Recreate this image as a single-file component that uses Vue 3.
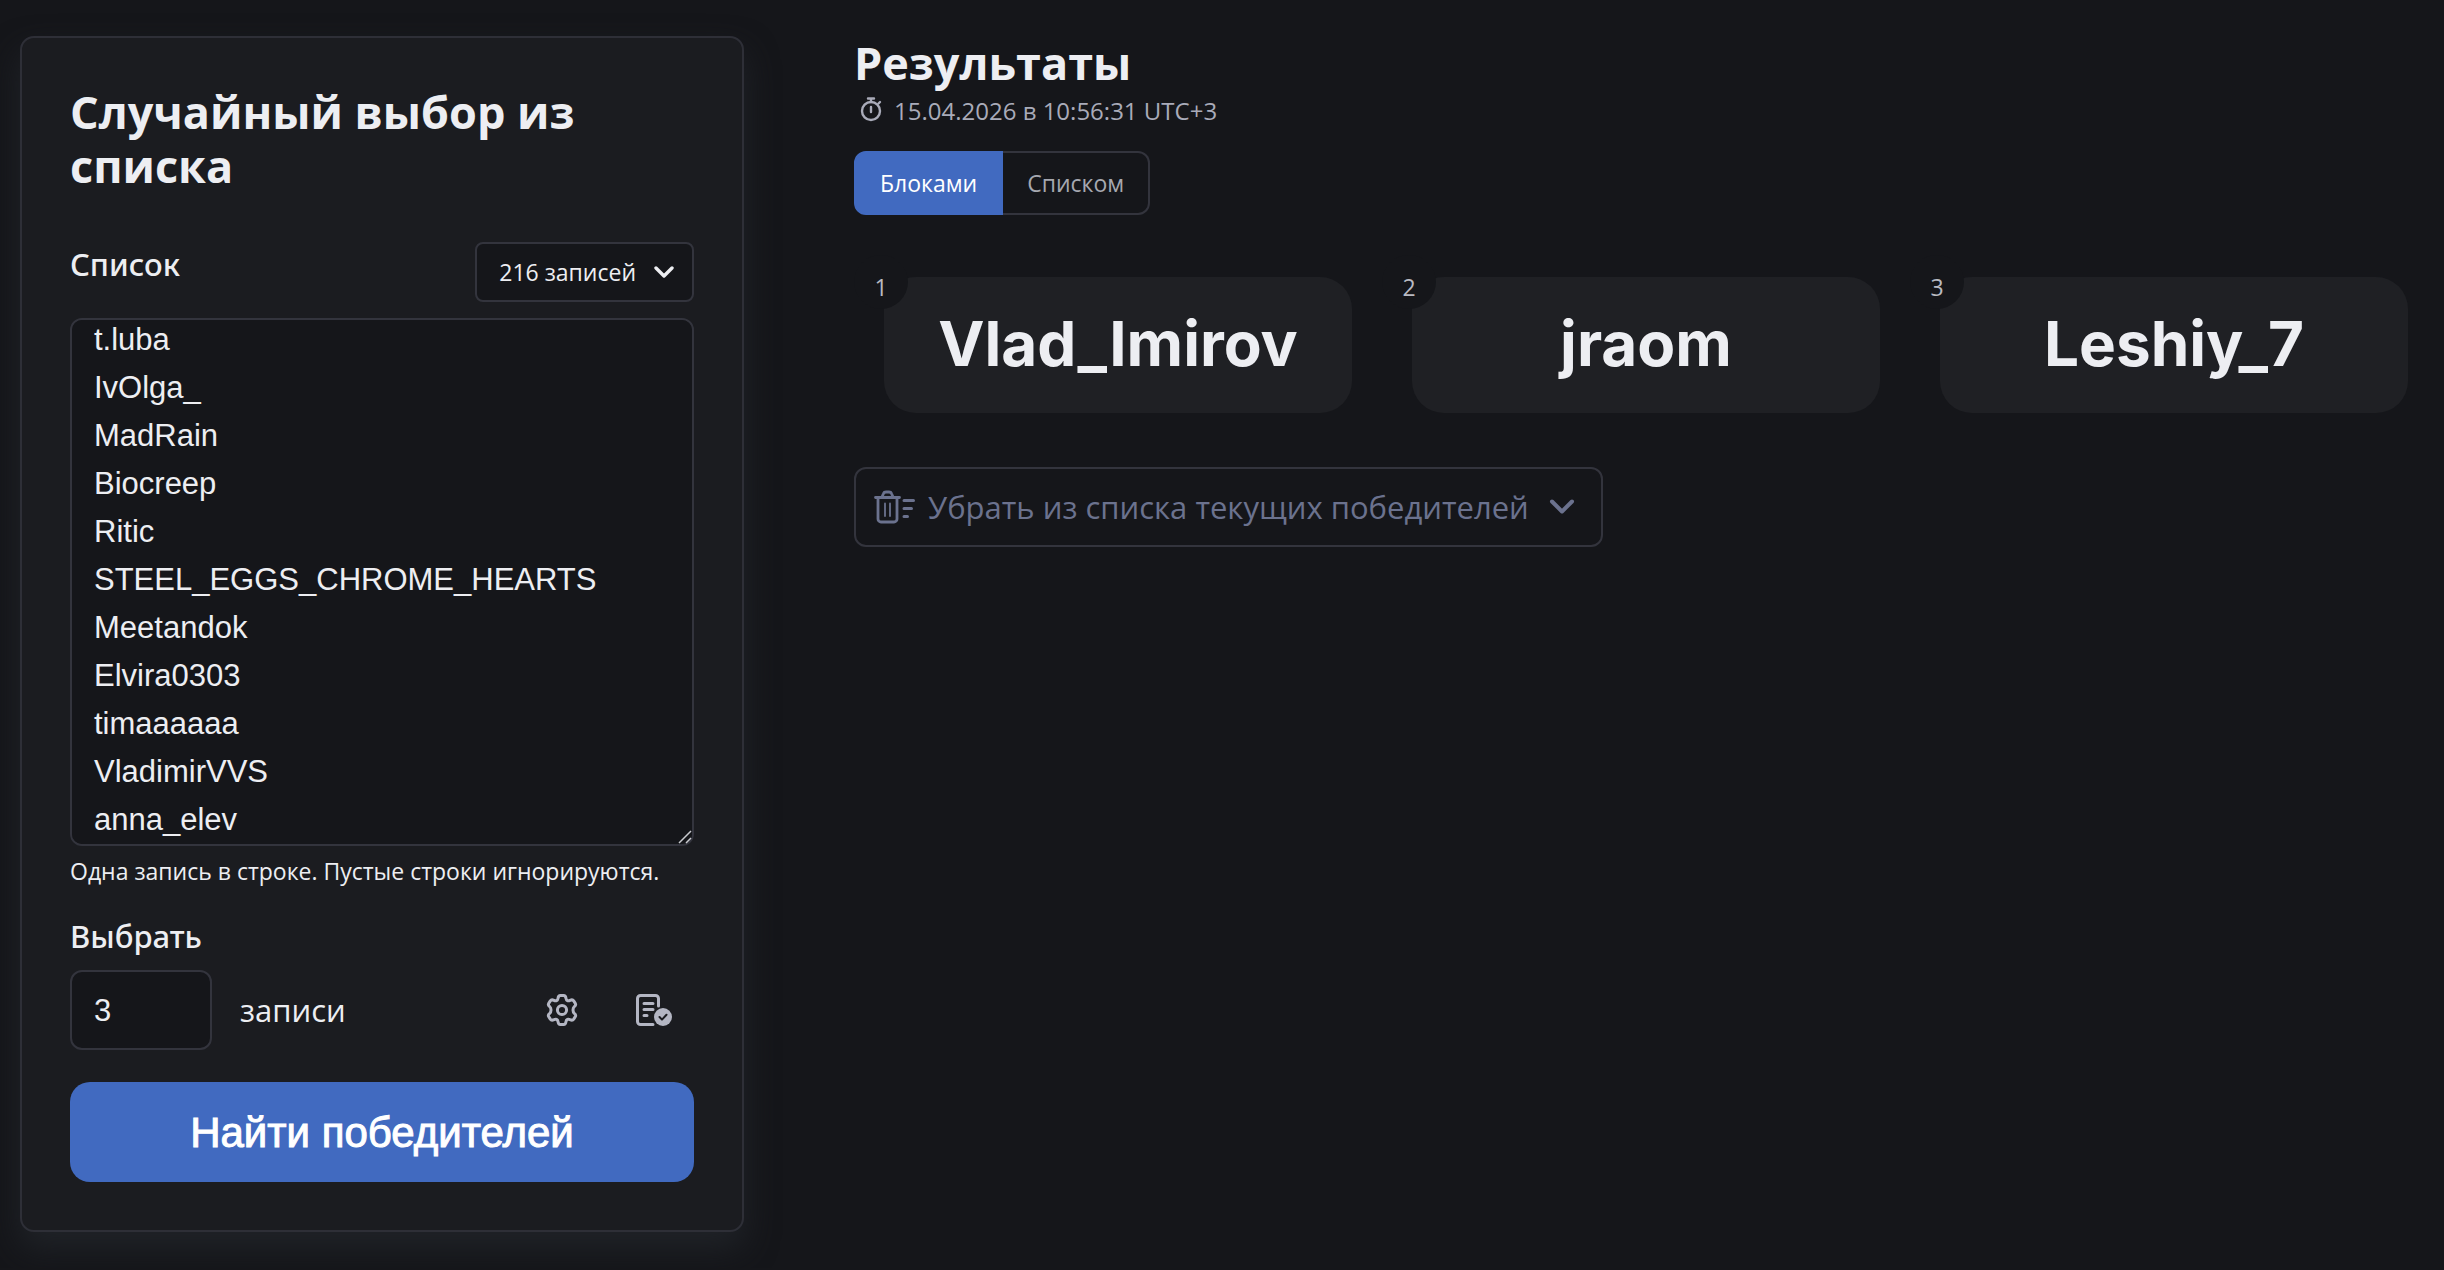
<script setup>
import { ref, nextTick, onMounted } from 'vue'

const listField = ref(null)
const entries = ref([
  't.luba',
  'IvOlga_',
  'MadRain',
  'Biocreep',
  'Ritic',
  'STEEL_EGGS_CHROME_HEARTS',
  'Meetandok',
  'Elvira0303',
  'timaaaaaa',
  'VladimirVVS',
  'anna_elev',
].join('\n'))
const count = ref('3')
const view = ref('blocks')
const views = [
  { id: 'blocks', label: 'Блоками' },
  { id: 'list', label: 'Списком' },
]
const winners = ['Vlad_Imirov', 'jraom', 'Leshiy_7']

// Keep the latest entries in view
onMounted(async () => {
  await nextTick()
  listField.value.scrollTop = listField.value.scrollHeight
})
</script>

<template>
  <div class="page">
    <form class="card" @submit.prevent>
      <h1 class="title">Случайный выбор из списка</h1>

      <div class="list-head">
        <label class="label" for="entries">Список</label>
        <button type="button" class="entries-menu">
          216 записей
          <svg width="20" height="12" viewBox="0 0 20 12" aria-hidden="true">
            <path d="M2 2l8 8 8-8" fill="none" stroke="currentColor" stroke-width="3.4" stroke-linecap="round" stroke-linejoin="round" />
          </svg>
        </button>
      </div>

      <div class="list-box">
        <textarea id="entries" ref="listField" v-model="entries" class="field list-field" spellcheck="false" aria-describedby="entries-hint"></textarea>
        <svg class="grip" width="14" height="14" viewBox="0 0 14 14" aria-hidden="true">
          <path d="M1 13L13 1M8 13l5-5" fill="none" stroke="#c9cacf" stroke-width="1.5" />
        </svg>
      </div>
      <p id="entries-hint" class="hint">Одна запись в строке. Пустые строки игнорируются.</p>

      <label class="label" for="count">Выбрать</label>
      <div class="count-row">
        <input id="count" v-model="count" class="field count-field" type="text" inputmode="numeric" />
        <span class="unit">записи</span>
        <button type="button" class="icon-button" aria-label="Настройки">
          <svg width="44" height="44" viewBox="0 0 44 44" fill="none" stroke="currentColor" stroke-width="3" stroke-linejoin="round">
            <path d="M18 10.400Q18.400 7.500 20.400 7.500H23.600Q25.600 7.500 26 10.400Q26.200 12 27.400 12.600Q28.500 13.200 30 12.400Q32.500 11.200 33.700 12.900L35.300 15.400Q36.300 17.100 34.300 18.700Q33 19.800 33 22Q33 24.200 34.300 25.300Q36.300 26.900 35.300 28.600L33.700 31.100Q32.500 32.800 30 31.600Q28.500 30.800 27.400 31.400Q26.200 32 26 33.600Q25.600 36.500 23.600 36.500H20.400Q18.400 36.500 18 33.600Q17.800 32 16.600 31.400Q15.500 30.800 14 31.600Q11.500 32.800 10.300 31.100L8.700 28.600Q7.700 26.900 9.700 25.300Q11 24.200 11 22Q11 19.800 9.700 18.700Q7.700 17.100 8.700 15.400L10.300 12.900Q11.500 11.200 14 12.400Q15.500 13.200 16.600 12.600Q17.800 12 18 10.400Z" />
            <circle cx="22" cy="22" r="4.600" />
          </svg>
        </button>
        <button type="button" class="icon-button" aria-label="Проверка списка">
          <svg width="44" height="44" viewBox="0 0 44 44" fill="none" stroke="currentColor" stroke-width="3" stroke-linecap="round" stroke-linejoin="round">
            <path d="M22 36.500H9.500a3 3 0 0 1-3-3v-23a3 3 0 0 1 3-3h15a3 3 0 0 1 3 3V18" />
            <path d="M13 15.500h9M13 21.500h9M13 27.500h3" />
            <circle cx="32" cy="29" r="9" fill="currentColor" stroke="none" />
            <path d="M28.500 29l2.500 2.600 4.500-4.800" stroke="#1b1c20" stroke-width="2" />
          </svg>
        </button>
      </div>

      <button type="submit" class="submit">Найти победителей</button>
    </form>

    <main class="results">
      <h2 class="results-title">Результаты</h2>
      <p class="stamp">
        <svg width="22" height="28" viewBox="0 0 22 28" fill="none" stroke="currentColor" stroke-width="2.400" stroke-linecap="round" aria-hidden="true">
          <circle cx="11" cy="14" r="9" />
          <path d="M11 10v5M8 1.500h6M11 2v3M18.500 6.500l1.500-1.500" />
        </svg>
        <time datetime="2026-04-15T10:56:31+03:00">15.04.2026 в 10:56:31 UTC+3</time>
      </p>

      <div class="toggle" role="group" aria-label="Вид">
        <button
          v-for="item in views"
          :key="item.id"
          type="button"
          class="toggle-item"
          :class="{ active: view === item.id }"
          :aria-pressed="view === item.id"
          @click="view = item.id"
        >{{ item.label }}</button>
      </div>

      <ol class="winners">
        <li v-for="(name, i) in winners" :key="name" class="winner">
          <span class="place">{{ i + 1 }}</span>
          {{ name }}
        </li>
      </ol>

      <button type="button" class="remove-menu">
        <svg width="42" height="34" viewBox="0 0 42 34" fill="none" stroke="currentColor" stroke-linecap="round" stroke-linejoin="round" aria-hidden="true">
          <path d="M1.500 7.500h24M4 8v21a3 3 0 0 0 3 3h13a3 3 0 0 0 3-3V8M8 7l1.500-3.500Q10 2 12 2h3q2 0 2.500 1.500L19 7" stroke-width="2.800" />
          <path d="M11 13.500v12.500M16 13.500v12.500" stroke-width="1.800" />
          <path d="M30 10.500h9.500M30 18.500h7.500M30 26.500h3.500" stroke-width="3" />
        </svg>
        <span>Убрать из списка текущих победителей</span>
        <svg width="26" height="16" viewBox="0 0 26 16" aria-hidden="true">
          <path d="M3 2.500l10 10 10-10" fill="none" stroke="currentColor" stroke-width="4" stroke-linecap="round" stroke-linejoin="round" />
        </svg>
      </button>
    </main>
  </div>
</template>

<style>
body {
  background: #15161a;
}
</style>

<style scoped>
.page {
  display: grid;
  grid-template-columns: minmax(0, 724fr) minmax(0, 1584fr);
  column-gap: 110px;
  align-items: start;
  padding: 36px 6px 36px 20px;
  color: #edeef2;
  font-family: "Open Sans", "Noto Sans", sans-serif;
  font-size: 31px;
  line-height: 44px;
}

.page * {
  box-sizing: border-box;
}

button {
  margin: 0;
  font-family: inherit;
  cursor: pointer;
}

.card {
  padding: 47px 48px 48px;
  background: #1b1c20;
  border: 2px solid #2e2f37;
  border-radius: 14px;
  box-shadow: 0 16px 32px #202328;
}

.title,
.results-title {
  margin: 0;
  font-size: 45px;
  font-weight: 700;
  line-height: 54px;
}

.list-head {
  display: flex;
  justify-content: space-between;
  align-items: flex-start;
  margin: 49px 0 16px;
}

.label {
  display: block;
  font-family: "Noto Sans", "Open Sans", sans-serif;
  font-weight: 500;
}

.entries-menu {
  display: flex;
  align-items: center;
  gap: 18px;
  height: 60px;
  padding: 0 18px 0 22px;
  color: #edeef2;
  background: #15161a;
  border: 2px solid #33343d;
  border-radius: 8px;
  font-size: 23px;
}

.field {
  display: block;
  color: #edeef2;
  background: #15161a;
  border: 2px solid #33343d;
  border-radius: 12px;
  font-family: "Liberation Sans", Arial, sans-serif;
  font-size: 31px;
  line-height: 48px;
}

.list-box {
  position: relative;
}

.list-field {
  width: 100%;
  height: 528px;
  padding: 0 22px;
  resize: none;
  scrollbar-width: none;
}

.grip {
  position: absolute;
  right: 2px;
  bottom: 2px;
}

.hint {
  margin: 8px 0 26px;
  font-size: 23px;
  line-height: 34px;
}

.count-row {
  display: flex;
  align-items: center;
  margin: 12px 0 32px;
}

.count-field {
  width: 142px;
  height: 80px;
  padding: 2px 22px 0;
}

.unit {
  flex: 1;
  margin-left: 28px;
}

.icon-button {
  display: flex;
  margin-left: 47px;
  padding: 0;
  color: #b4b6c3;
  background: none;
  border: 0;
}

.icon-button:last-child {
  margin-right: 19px;
}

.submit {
  width: 100%;
  height: 100px;
  padding: 2px 0 0;
  color: #fff;
  background: #416ac0;
  border: 0;
  border-radius: 20px;
  font-family: "Liberation Sans", Arial, sans-serif;
  font-size: 42px;
  -webkit-text-stroke: 1px currentColor;
}

.stamp {
  display: flex;
  align-items: center;
  gap: 12px;
  margin: 0 0 19px;
  padding-left: 6px;
  color: #a9abb9;
  font-size: 24px;
  line-height: 42px;
}

.toggle {
  display: flex;
  width: fit-content;
  height: 64px;
}

.toggle-item {
  padding: 0 24px;
  color: #a6a8b0;
  background: none;
  border: 2px solid #33343d;
  border-left: 0;
  border-radius: 0 12px 12px 0;
  font-size: 23px;
}

.toggle-item:first-child {
  border-left: 2px solid #33343d;
  border-radius: 12px 0 0 12px;
}

.toggle-item.active {
  color: #fff;
  background: #416ac0;
  border-color: #416ac0;
}

.winners {
  display: grid;
  grid-template-columns: repeat(3, minmax(0, 1fr));
  column-gap: 60px;
  margin: 62px 0 54px;
  padding: 0 30px;
  list-style: none;
}

.winner {
  position: relative;
  padding: 25px 0 27px;
  background: #1f2024;
  border-radius: 32px;
  font-family: Inter, "Open Sans", sans-serif;
  font-size: 62px;
  font-weight: 700;
  line-height: 84px;
  text-align: center;
}

.place {
  position: absolute;
  top: -22px;
  left: -30px;
  width: 54px;
  height: 54px;
  color: #b9bac2;
  background: #15161a;
  border-radius: 50%;
  font-family: "Open Sans", "Noto Sans", sans-serif;
  font-size: 23px;
  font-weight: 400;
  line-height: 64px;
}

.remove-menu {
  display: flex;
  align-items: center;
  gap: 12px;
  height: 80px;
  padding: 0 26px 0 18px;
  color: #6b728e;
  background: none;
  border: 2px solid #33343d;
  border-radius: 12px;
  font-size: 31px;
}

.remove-menu span {
  margin-right: 8px;
}
</style>
